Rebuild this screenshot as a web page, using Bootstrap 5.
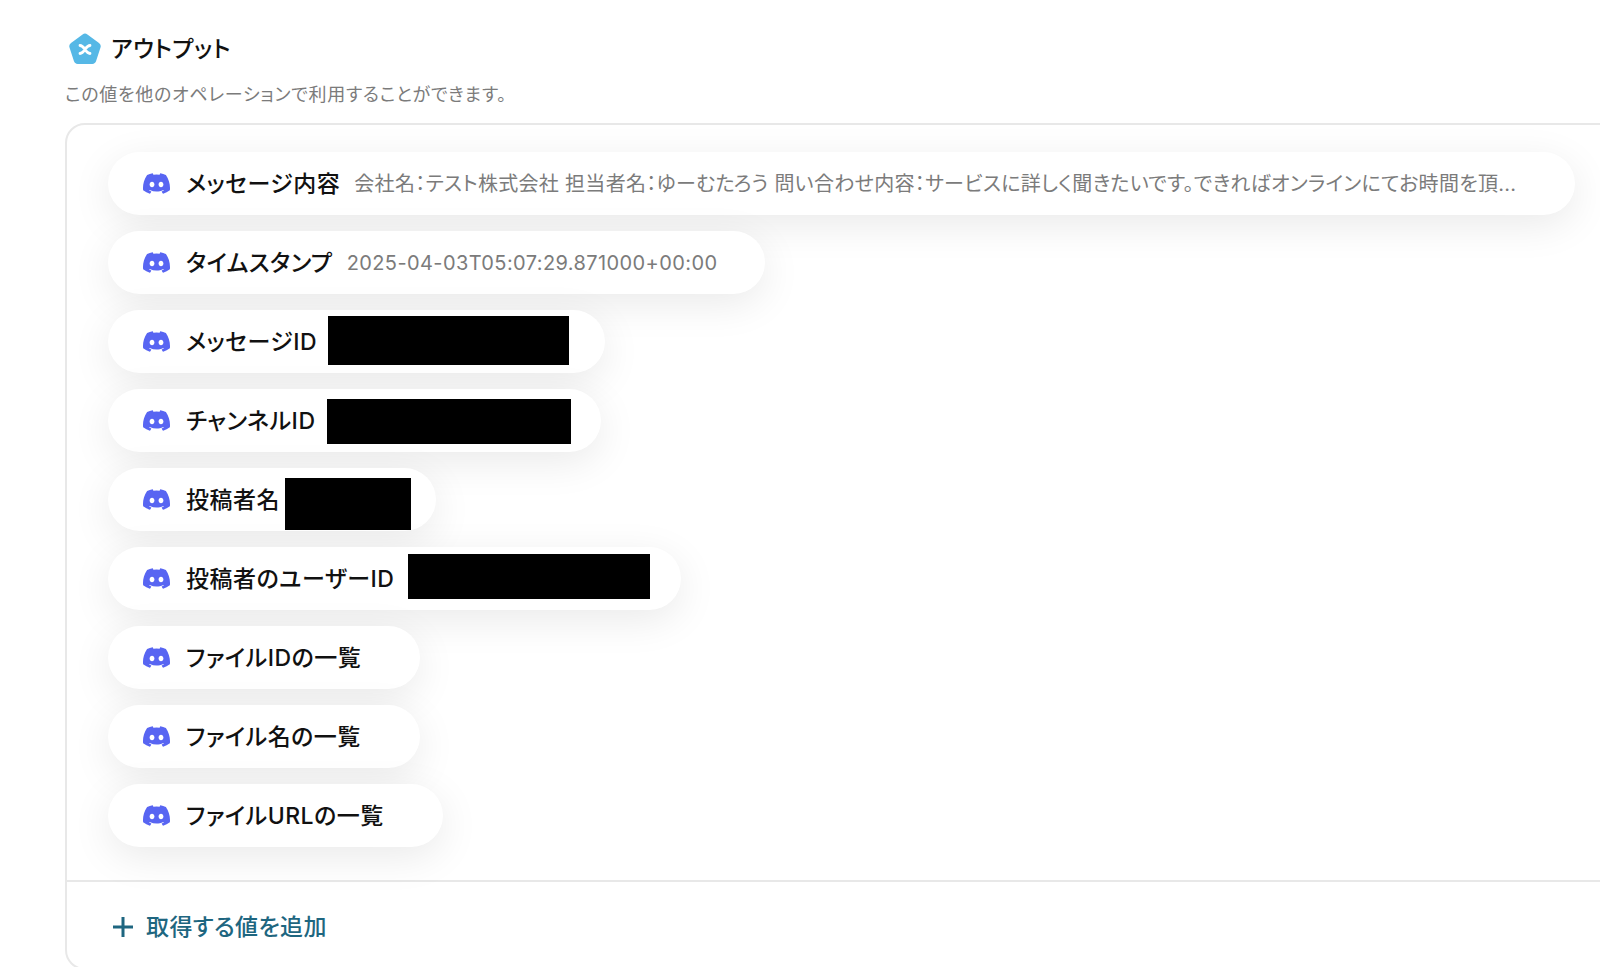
<!DOCTYPE html>
<html lang="ja">
<head>
    <meta charset="UTF-8">
    <meta name="viewport" content="width=device-width, initial-scale=1.0">
    <title>アウトプット</title>
    <link href="https://cdn.jsdelivr.net/npm/bootstrap@5.3.2/dist/css/bootstrap.min.css" rel="stylesheet">
    <style>
        html, body {
            height: 100%;
            overflow: hidden;
        }
        body {
            font-family: "Inter", "Noto Sans CJK JP", sans-serif;
            font-feature-settings: "palt";
            background-color: #fff;
            color: #111;
        }
        .page-wrap {
            width: 1700px;
            padding: 33px 0 0 65px;
        }
        .out-title {
            height: 32px;
            font-size: 23px;
            font-weight: 500;
            line-height: 32px;
            letter-spacing: .5px;
        }
        .out-logo {
            width: 34px;
            height: 32px;
            margin-left: 3px;
            margin-right: 9px;
        }
        .out-sub {
            margin-top: 18px;
            font-size: 18px;
            line-height: 24px;
            letter-spacing: .7px;
            color: #7b7b7b;
        }
        .out-card {
            margin-top: 16px;
            border: 2px solid #e8e8e8;
            border-radius: 20px;
            background-color: #fff;
        }
        .pill-list {
            padding: 27px 0 33px 41px;
        }
        .out-pill {
            height: 63px;
            padding: 0 59px 0 35px;
            border-radius: 32px;
            background-color: #fff;
            box-shadow: 0 10px 40px rgba(0, 0, 0, .085);
        }
        .dc-icon {
            width: 27px;
            height: 27px;
            margin-right: 16px;
            fill: #5865f2;
            flex-shrink: 0;
        }
        .pill-label {
            font-size: 23px;
            font-weight: 500;
            line-height: 30px;
            letter-spacing: .5px;
            white-space: nowrap;
        }
        .pill-value {
            margin-left: 14px;
            font-size: 20px;
            line-height: 30px;
            letter-spacing: .3px;
            color: #7b7b7b;
            white-space: nowrap;
        }
        .pill-mono {
            margin-right: -11px;
            letter-spacing: .4px;
        }
        .redact {
            background-color: #000;
            flex-shrink: 0;
        }
        .redact-msg { width: 241px; height: 49px; margin: -2px -23px 0 11px; }
        .redact-ch { width: 244px; height: 45px; margin: 2px -29px 0 12px; }
        .redact-name { width: 126px; height: 52px; margin: 9px -34px 0 5px; }
        .redact-user { width: 242px; height: 45px; margin: -4px -28px 0 14px; }
        .out-foot {
            height: 88px;
            padding: 4px 0 0 45px;
            border-top: 2px solid #e8e8e8;
            color: #1e6680;
            font-size: 23px;
            font-weight: 500;
            line-height: 30px;
            letter-spacing: .4px;
        }
        .plus-icon {
            width: 22px;
            height: 22px;
            margin-right: 12px;
            stroke: #1e6680;
            stroke-width: 3;
            fill: none;
        }
    </style>
</head>
<body>
    <svg class="d-none" aria-hidden="true">
        <symbol id="dc" viewBox="0 0 16 16">
            <path d="M13.545 2.907a13.227 13.227 0 0 0-3.257-1.011.05.05 0 0 0-.052.025c-.141.25-.297.577-.406.833a12.19 12.19 0 0 0-3.658 0 8.258 8.258 0 0 0-.412-.833.051.051 0 0 0-.052-.025c-1.125.194-2.22.534-3.257 1.011a.041.041 0 0 0-.021.018C.356 6.024-.213 9.047.066 12.032c.001.014.01.028.021.037a13.276 13.276 0 0 0 3.995 2.02.05.05 0 0 0 .056-.019c.308-.42.582-.863.818-1.329a.05.05 0 0 0-.01-.059.051.051 0 0 0-.018-.011 8.875 8.875 0 0 1-1.248-.595.05.05 0 0 1-.02-.066.051.051 0 0 1 .015-.019c.084-.063.168-.129.248-.195a.05.05 0 0 1 .051-.007c2.619 1.196 5.454 1.196 8.041 0a.052.052 0 0 1 .053.007c.08.066.164.132.248.195a.051.051 0 0 1-.004.085 8.254 8.254 0 0 1-1.249.594.05.05 0 0 0-.03.03.052.052 0 0 0 .003.041c.24.465.515.909.817 1.329a.05.05 0 0 0 .056.019 13.235 13.235 0 0 0 4.001-2.02.049.049 0 0 0 .021-.037c.334-3.451-.559-6.449-2.366-9.106a.034.034 0 0 0-.02-.019Zm-8.198 7.307c-.789 0-1.438-.724-1.438-1.612 0-.889.637-1.613 1.438-1.613.807 0 1.45.73 1.438 1.613 0 .888-.637 1.612-1.438 1.612Zm5.316 0c-.788 0-1.438-.724-1.438-1.612 0-.889.637-1.613 1.438-1.613.807 0 1.451.73 1.438 1.613 0 .888-.631 1.612-1.438 1.612Z"/>
        </symbol>
    </svg>

    <div class="page-wrap">
        <div class="d-flex align-items-center out-title">
            <svg class="out-logo" viewBox="0 0 34 32">
                <path d="M14.6 1.5a4 4 0 0 1 4.8 0l11.6 8.4a4 4 0 0 1 1.5 4.5l-4.4 13.7a4 4 0 0 1-3.9 2.8H9.800a4 4 0 0 1-3.900-2.800L1.500 14.400a4 4 0 0 1 1.500-4.500Z" fill="#56b8e6"/>
                <path d="M12 12.500c2 0 3 1 5 4s3 4 5 4M22 12.500c-2 0-3 1-5 4s-3 4-5 4" stroke="#fff" stroke-width="2.800" stroke-linecap="round" fill="none"/>
            </svg>
            <span>アウトプット</span>
        </div>
        <div class="out-sub">この値を他のオペレーションで利用することができます。</div>

        <div class="out-card">
            <div class="d-flex flex-column align-items-start gap-3 pill-list">
                <div class="d-inline-flex align-items-center out-pill">
                    <svg class="dc-icon"><use href="#dc"/></svg>
                    <span class="pill-label">メッセージ内容</span>
                    <span class="pill-value">会社名：テスト株式会社 担当者名：ゆーむたろう 問い合わせ内容：サービスに詳しく聞きたいです。できればオンラインにてお時間を頂...</span>
                </div>
                <div class="d-inline-flex align-items-center out-pill">
                    <svg class="dc-icon"><use href="#dc"/></svg>
                    <span class="pill-label">タイムスタンプ</span>
                    <span class="pill-value pill-mono">2025-04-03T05:07:29.871000+00:00</span>
                </div>
                <div class="d-inline-flex align-items-center out-pill">
                    <svg class="dc-icon"><use href="#dc"/></svg>
                    <span class="pill-label">メッセージID</span>
                    <span class="redact redact-msg"></span>
                </div>
                <div class="d-inline-flex align-items-center out-pill">
                    <svg class="dc-icon"><use href="#dc"/></svg>
                    <span class="pill-label">チャンネルID</span>
                    <span class="redact redact-ch"></span>
                </div>
                <div class="d-inline-flex align-items-center out-pill">
                    <svg class="dc-icon"><use href="#dc"/></svg>
                    <span class="pill-label">投稿者名</span>
                    <span class="redact redact-name"></span>
                </div>
                <div class="d-inline-flex align-items-center out-pill">
                    <svg class="dc-icon"><use href="#dc"/></svg>
                    <span class="pill-label">投稿者のユーザーID</span>
                    <span class="redact redact-user"></span>
                </div>
                <div class="d-inline-flex align-items-center out-pill">
                    <svg class="dc-icon"><use href="#dc"/></svg>
                    <span class="pill-label">ファイルIDの一覧</span>
                </div>
                <div class="d-inline-flex align-items-center out-pill">
                    <svg class="dc-icon"><use href="#dc"/></svg>
                    <span class="pill-label">ファイル名の一覧</span>
                </div>
                <div class="d-inline-flex align-items-center out-pill">
                    <svg class="dc-icon"><use href="#dc"/></svg>
                    <span class="pill-label">ファイルURLの一覧</span>
                </div>
            </div>
            <div class="d-flex align-items-center out-foot">
                <svg class="plus-icon" viewBox="0 0 22 22"><path d="M11 1v20M1 11h20"/></svg>
                <span>取得する値を追加</span>
            </div>
        </div>
    </div>

    <script src="https://cdn.jsdelivr.net/npm/bootstrap@5.3.2/dist/js/bootstrap.bundle.min.js"></script>
</body>
</html>
